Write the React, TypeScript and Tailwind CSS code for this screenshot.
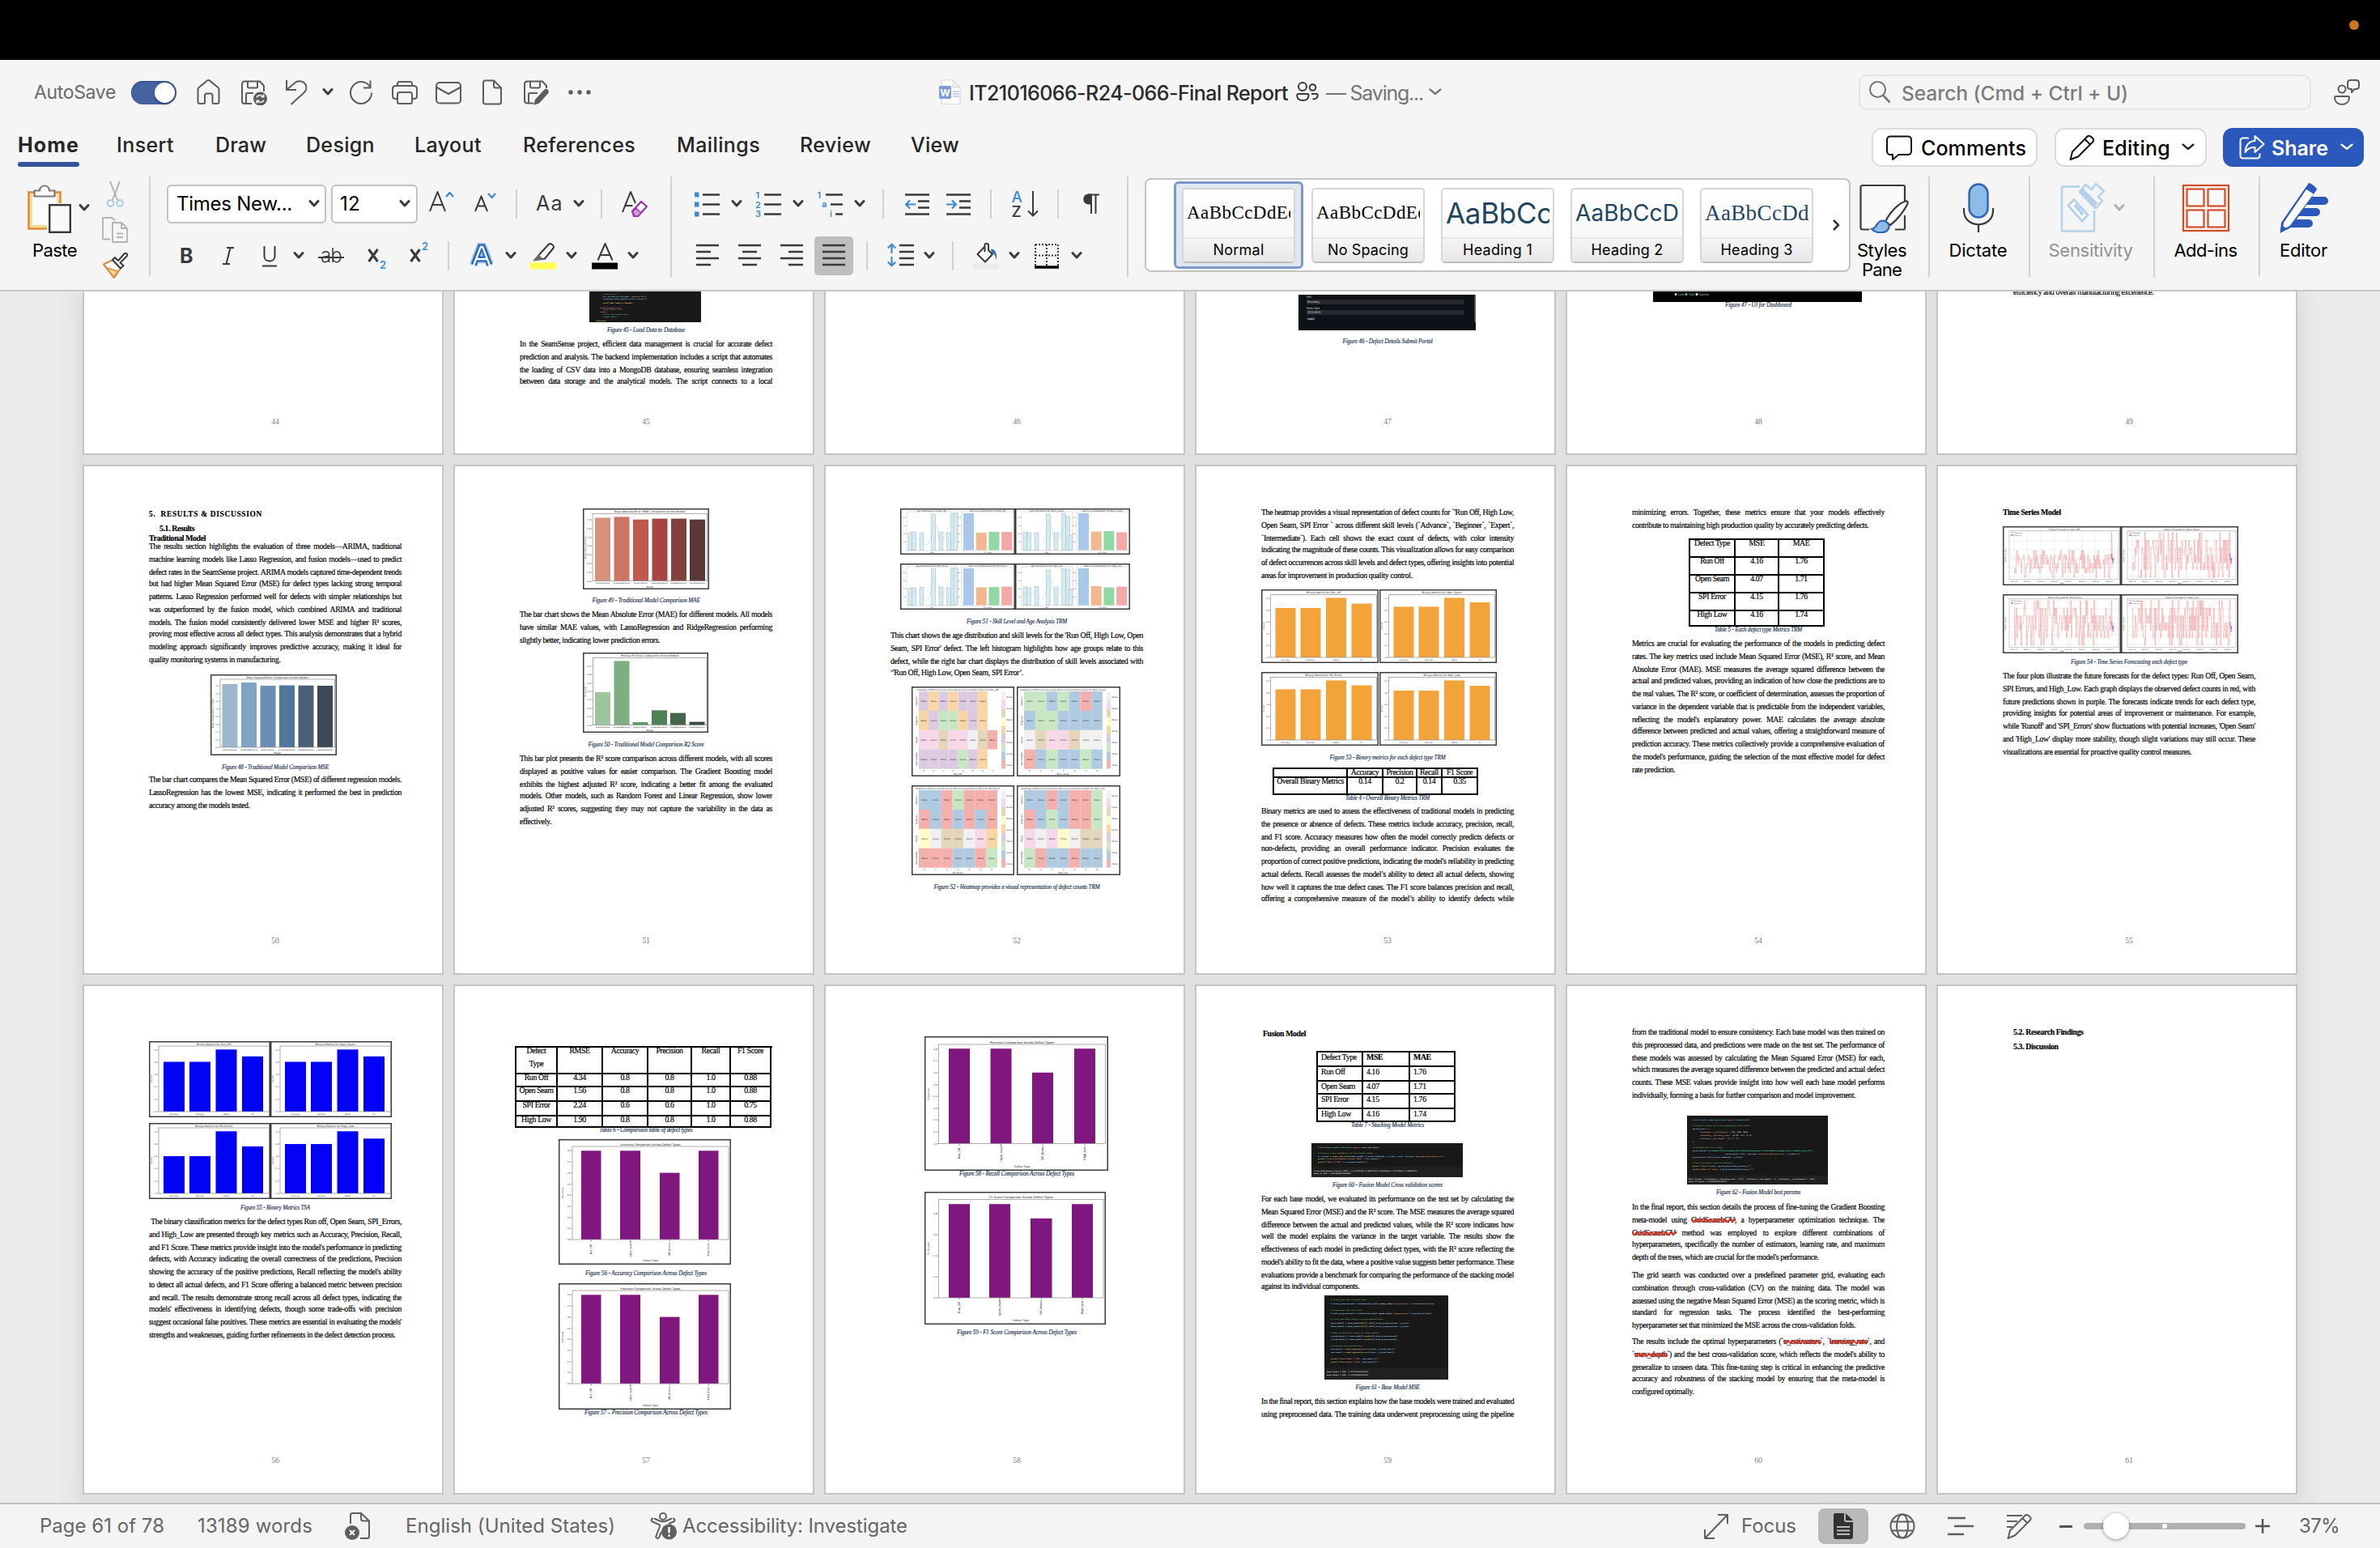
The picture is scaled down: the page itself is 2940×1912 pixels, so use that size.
import React, { useLayoutEffect, useRef, useState } from "react";

/* ------------------------------------------------------------------ */
/* Text helpers                                                        */
/* ------------------------------------------------------------------ */

/** Single-line text that spreads or tightens its tracking to fill `w` pixels. */
function Fit({ w, className = "", children }: { w: number; className?: string; children: string }) {
  const ref = useRef<HTMLSpanElement>(null);
  const [spacing, setSpacing] = useState(0);
  useLayoutEffect(() => {
    const el = ref.current;
    if (!el) return;
    el.style.letterSpacing = "0px";
    const natural = el.getBoundingClientRect().width;
    const next = (w - natural) / children.length;
    el.style.letterSpacing = `${next}px`;
    setSpacing(next);
  }, [w, children]);
  return (
    <span ref={ref} className={`inline-block whitespace-pre shrink-0 ${className}`} style={{ letterSpacing: spacing }}>
      {children}
    </span>
  );
}

const misspelt = /(\{[^}]+\})/;
const bodyTracking = -0.37;

/** Red zigzag drawn over the lower half of a misspelt word. */
function Squiggle() {
  const teeth = Array.from({ length: 20 }, (_, i) => `L${(i * 6 + 3).toFixed(1)} 5.5L${i * 6 + 6} 1.5`).join("");
  return (
    <svg className="absolute top-[5px] left-0 h-[7px] w-[calc(100%+1px)] overflow-hidden" fill="none" stroke="#dc3222" strokeWidth="1.9">
      <path d={`M0 1.5${teeth}`} strokeLinejoin="round" />
    </svg>
  );
}

/** One justified line of a paragraph; tightens when the words are too wide. */
function Line({ text, dip, last }: { text: string; dip: boolean; last: boolean }) {
  const ref = useRef<HTMLDivElement>(null);
  const [spacing, setSpacing] = useState(bodyTracking);
  useLayoutEffect(() => {
    const el = ref.current;
    if (!el) return;
    el.style.letterSpacing = `${bodyTracking}px`;
    const extra = el.scrollWidth - el.clientWidth;
    const next = bodyTracking - (extra > 0 ? (extra + 0.6) / text.length : 0);
    el.style.letterSpacing = `${next}px`;
    setSpacing(next);
  }, [text]);
  return (
    <div
      ref={ref}
      className={`h-4 leading-4 whitespace-nowrap ${dip ? "-mt-0.5" : ""} ${last ? "" : "[text-align-last:justify]"}`}
      style={{ letterSpacing: spacing }}
    >
      {text.split(misspelt).map((part, i) =>
        part.startsWith("{") ? (
          <span key={i} className="relative inline-block leading-4">
            {part.slice(1, -1)}
            <Squiggle />
          </span>
        ) : (
          <React.Fragment key={i}>{part}</React.Fragment>
        ),
      )}
    </div>
  );
}

function Para({ className = "", lines, open = false }: { className?: string; lines: string[]; open?: boolean }) {
  return (
    <div className={className}>
      {lines.map((l, i) => (
        <Line key={i} text={l} dip={i % 4 === 3} last={!open && i === lines.length - 1} />
      ))}
    </div>
  );
}

function Caption({ className = "", w, children }: { className?: string; w: number; children: string }) {
  return (
    <div className={`flex h-3 justify-center text-[7.2px] leading-3 italic text-[#2c3c57] ${className}`}>
      <Fit w={w}>{children}</Fit>
    </div>
  );
}

/* ------------------------------------------------------------------ */
/* Pages                                                               */
/* ------------------------------------------------------------------ */

function Page({ n, short = false, children }: { n: number; short?: boolean; children?: React.ReactNode }) {
  return (
    <article
      className={`flex w-[446px] shrink-0 flex-col overflow-hidden border-2 border-[#c4c4c4] bg-white pr-[50px] pl-20 font-['Liberation_Serif','Times_New_Roman',serif] text-[9.8px] tracking-[-0.37px] text-black [-webkit-text-stroke:0.18px_currentColor] ${
        short ? "h-[202px] border-t-0" : "h-[630px]"
      }`}
    >
      {children}
      <div className={`mt-auto h-4 text-center leading-4 tracking-[-0.2px] text-[#7a7a7a] [-webkit-text-stroke:0px] ${short ? "mb-[31px]" : "mb-8"}`}>{n}</div>
    </article>
  );
}

/* ------------------------------------------------------------------ */
/* Charts                                                              */
/* ------------------------------------------------------------------ */

type Bar = [x: number, w: number, top: number];

interface ChartProps {
  w: number;
  h: number;
  plot: [number, number, number, number];
  bars: Bar[];
  colors: string[];
  title: string;
  labels: string[];
  xTitle?: string;
  yTitle?: string;
  ticks: string[];
  tickStep: number;
  rotated?: boolean;
  className?: string;
  size?: number;
}

function BarChart({ w, h, plot, bars, colors, title, labels, xTitle, yTitle, ticks, tickStep, rotated, className = "", size = 2.6 }: ChartProps) {
  const [x0, y0, x1, y1] = plot;
  const base = y1;
  return (
    <svg width={w} height={h} viewBox={`0 0 ${w} ${h}`} className={`shrink-0 tracking-normal ${className}`} fontFamily="DejaVu Sans, sans-serif" stroke="none">
      <rect x="0.75" y="0.75" width={w - 1.5} height={h - 1.5} fill="#fff" stroke="#3c3c3c" strokeWidth="1.5" />
      {bars.map(([bx, bw, top], i) => (
        <rect key={i} x={bx} y={top} width={bw} height={base - top} fill={colors[i % colors.length]} />
      ))}
      <rect x={x0} y={y0} width={x1 - x0} height={y1 - y0} fill="none" stroke="#8a8a8a" strokeWidth="0.7" />
      <text x={(x0 + x1) / 2} y={y0 - 1.4} fontSize={size * 1.35} textAnchor="middle" fill="#111">
        {title}
      </text>
      {ticks.map((t, i) => (
        <g key={i}>
          <path d={`M${x0 - 1.5} ${base - i * tickStep}H${x0}`} stroke="#777" strokeWidth="0.5" />
          <text x={x0 - 2} y={base - i * tickStep + 1} fontSize={size} textAnchor="end" fill="#333">
            {t}
          </text>
        </g>
      ))}
      {labels.map((l, i) => {
        const cx = bars[i][0] + bars[i][1] / 2;
        return rotated ? (
          <g key={i}>
            <path d={`M${cx} ${base}v2.5`} stroke="#555" strokeWidth="0.6" />
            <text transform={`translate(${cx + 1.2} ${base + 12}) rotate(-90)`} fontSize={size * 1.25} textAnchor="middle" fill="#111">
              {l}
            </text>
          </g>
        ) : (
          <text key={i} x={cx} y={base + 3.6} fontSize={size} textAnchor="middle" fill="#222">
            {l}
          </text>
        );
      })}
      {xTitle && (
        <text x={(x0 + x1) / 2} y={h - (rotated ? 4 : 2)} fontSize={size * 1.2} textAnchor="middle" fill="#111">
          {xTitle}
        </text>
      )}
      {yTitle && (
        <text transform={`translate(${rotated ? 5.5 : 4} ${(y0 + y1) / 2}) rotate(-90)`} fontSize={size * 1.15} textAnchor="middle" fill="#333">
          {yTitle}
        </text>
      )}
    </svg>
  );
}

const modelNames = ["RandomForest", "GradientBoosting", "SupportVector", "LinearRegression", "RidgeRegression", "LassoRegression"];
const metricNames = ["Accuracy", "Precision", "Recall", "F1"];
const defectNames = ["Run_Off", "Open_Seam", "SPI_Errors", "High_Low"];

function SkillChart({ hist, skills, name }: { hist: number[]; skills: number[]; name: string }) {
  const xs = [10, 14.5, 24, 38.5, 48, 57.5, 62.5, 66];
  return (
    <svg width="142" height="57" viewBox="0 0 142 57" className="shrink-0 tracking-normal" fontFamily="DejaVu Sans, sans-serif" stroke="none">
      <rect x="0.75" y="0.75" width="140.5" height="55.5" fill="#fff" stroke="#3c3c3c" strokeWidth="1.5" />
      <rect x="8" y="4" width="63" height="48" fill="none" stroke="#bbb" strokeWidth="0.5" />
      <rect x="76" y="4" width="64" height="48" fill="none" stroke="#bbb" strokeWidth="0.5" />
      {hist.map((t, i) => (
        <rect key={i} x={xs[i]} y={t} width="5" height={51.5 - t} fill="#d5edf2" stroke="#8fa3a7" strokeWidth="0.4" />
      ))}
      <path d="M10 38q6-4 12 0t10 8q5-2 8-22t8 14q4 8 8-6t10-16" fill="none" stroke="#add8e6" strokeWidth="0.5" />
      {skills.map((t, i) => (
        <rect key={i} x={78 + i * 15.7} y={t} width="13" height={51.5 - t} fill={["#a9c7ea", "#f1b78f", "#91d8a2", "#f4a8a8"][i]} />
      ))}
      <text x="39" y="3.6" fontSize="2.6" textAnchor="middle" fill="#333">{`Age Distribution for ${name}`}</text>
      <text x="108" y="3.6" fontSize="2.6" textAnchor="middle" fill="#333">{`Skill Level Distribution for ${name}`}</text>
      <text x="39" y="55.2" fontSize="2" textAnchor="middle" fill="#333">Age</text>
      <text x="108" y="55.2" fontSize="2" textAnchor="middle" fill="#333">Skill_Level</text>
      {[12, 22, 32, 42].map((y, i) => (
        <g key={y} fill="#555" fontSize="2">
          <text x="7" y={y} textAnchor="end">{400 - i * 100}</text>
          <text x="75" y={y} textAnchor="end">{800 - i * 200}</text>
        </g>
      ))}
    </svg>
  );
}

const pastel: Record<string, string> = {
  R: "#f3b0ad", B: "#b0cbe1", G: "#cae7c4", P: "#dccae2", O: "#fad6a5", Y: "#fefdca", T: "#e3d6bb", K: "#f7d8e9", W: "#f1f1f1", _: "#ffffff",
};

function Heatmap({ w, rows, name }: { w: number; rows: string[]; name: string }) {
  const cols = rows[0].length;
  const cw = 97 / cols;
  return (
    <svg width={w} height="111" viewBox={`0 0 ${w} 111`} className="shrink-0 tracking-normal" fontFamily="DejaVu Sans, sans-serif" stroke="none">
      <rect x="0.75" y="0.75" width={w - 1.5} height="109.5" fill="#fff" stroke="#3c3c3c" strokeWidth="1.5" />
      <text x="57" y="4.6" fontSize="2.7" textAnchor="middle" fill="#222">{`Heatmap of Defect Counts across Skill Levels and Defect Types for ${name}`}</text>
      {rows.map((row, r) =>
        row.split("").map((c, i) => (
          <g key={`${r}-${i}`}>
            <rect x={9 + i * cw} y={6 + r * 23.9} width={cw + 0.1} height="24" fill={pastel[c]} />
            {c !== "_" && (
              <text x={9 + (i + 0.5) * cw} y={19 + r * 23.9} fontSize="2.5" textAnchor="middle" fill="#222">
                {23000 + ((i * 7 + r * 5) % 9) * 1000}
              </text>
            )}
          </g>
        )),
      )}
      {rows[0].split("").map((_, i) => (
        <text key={i} x={9 + (i + 0.5) * cw} y="105" fontSize="2.6" textAnchor="middle" fill="#222">{i}</text>
      ))}
      {"WKTYOPGBR".split("").map((c, i) => (
        <rect key={c} x="111" y={6 + i * 10.6} width="5" height="10.7" fill={pastel[c]} />
      ))}
      {Array.from({ length: 7 }, (_, i) => (
        <text key={i} x="117" y={14 + i * 14} fontSize="2.5" fill="#222">{45000 - i * 5000}</text>
      ))}
      {["Advance", "Beginner", "Expert", "Intermediate"].map((s, i) => (
        <text key={s} transform={`translate(7.4 ${18 + i * 23.9}) rotate(-90)`} fontSize="2.6" textAnchor="middle" fill="#222">{s}</text>
      ))}
      <text x="57" y="108.6" fontSize="2.6" textAnchor="middle" fill="#222">{name}</text>
    </svg>
  );
}

function noise(seed: number, low: number, high: number, top: number) {
  let s = seed;
  const rnd = () => {
    s = (s * 16807) % 2147483647;
    return s / 2147483647;
  };
  for (let i = 0; i < 8; i++) rnd();
  let d = "";
  for (let x = 14; x < 134; x += 0.85) {
    const level = Math.round(rnd() * 6) / 6;
    const y = low - level * (low - high);
    d += d ? `H${x.toFixed(1)}V${y.toFixed(1)}` : `M${x.toFixed(1)} ${y.toFixed(1)}`;
  }
  return `${d}L134.5 ${top}L135.3 ${low - 12}`;
}

function Series({ w, seed, high, name }: { w: number; seed: number; high: number; name: string }) {
  return (
    <svg width={w} height="73" viewBox={`0 0 ${w} 73`} className="shrink-0 tracking-normal" fontFamily="DejaVu Sans, sans-serif">
      <rect x="0.75" y="0.75" width={w - 1.5} height="71.5" fill="#fff" stroke="#3c3c3c" strokeWidth="1.5" />
      <rect x="8" y="5.5" width={w - 11} height="60" fill="none" stroke="#aaa" strokeWidth="0.6" />
      <path
        d={`M14 5.5v60M30 5.5v60M47 5.5v60M64 5.5v60M81 5.5v60M98 5.5v60M115 5.5v60M132 5.5v60M8 7h${w - 11}M8 18h${w - 11}M8 29h${w - 11}M8 40h${w - 11}M8 51h${w - 11}M8 62h${w - 11}`}
        stroke="#dedede" strokeWidth="0.5" fill="none"
      />
      <path d={noise(seed, 63, high, 7.5)} fill="none" stroke="#e8484c" strokeOpacity="0.7" strokeWidth="0.42" />
      <path d="M134.5 34l1 8 1 4M136 44l1-5" fill="none" stroke="#a33bb5" strokeWidth="1.1" strokeDasharray="1.4 0.8" />
      <g stroke="none">
        <text x={w / 2 + 3} y="4.6" fontSize="2.8" textAnchor="middle" fill="#333">{`Future Forecast for ${name}`}</text>
        {[14, 30, 47, 64, 81, 98, 115, 132].map((x, i) => (
          <text key={x} x={x} y="68.6" fontSize="2.2" textAnchor="middle" fill="#444">{`202${1 + (i >> 1)}-0${1 + (i % 2) * 6}`}</text>
        ))}
        <text x={w / 2} y="71.2" fontSize="2.2" textAnchor="middle" fill="#444">Date</text>
        <text transform="translate(4 36) rotate(-90)" fontSize="2.4" textAnchor="middle" fill="#555">Defect Counts</text>
        <text x="14" y="9" fontSize="2" fill="#444">Observed</text>
        <text x="14" y="12" fontSize="2" fill="#444">Forecast</text>
      </g>
      <path d="M10 8h3" stroke="#e8484c" strokeWidth="0.6" />
      <path d="M10 11h3" stroke="#8e24aa" strokeWidth="1" />
    </svg>
  );
}

/* ------------------------------------------------------------------ */
/* Dark editor captures                                                */
/* ------------------------------------------------------------------ */

type Token = [text: string, tone: string];
interface CodeLine {
  x: number;
  y: number;
  t: Token[];
}
const tones: Record<string, string> = { g: "#6a9955", b: "#8fc6e8", o: "#ce9178", y: "#dcc873", w: "#d4d4d4", p: "#c586c0", t: "#4ec9b0" };

function CodeShot({ w, h, split, lines, size = 2.45, className = "" }: { w: number; h: number; split?: number; lines: CodeLine[]; size?: number; className?: string }) {
  return (
    <svg width={w} height={h} viewBox={`0 0 ${w} ${h}`} className={`shrink-0 tracking-normal ${className}`} fontFamily="DejaVu Sans Mono, monospace" fontWeight="700" fontSize={size} stroke="none">
      <rect width={w} height={h} fill="#181818" />
      {split && <rect y={split} width={w} height={h - split} fill="#202020" />}
      {lines.map((l, i) => (
        <text key={i} x={l.x} y={l.y} xmlSpace="preserve">
          {l.t.map(([s, tone], j) => (
            <tspan key={j} fill={tones[tone]}>{s}</tspan>
          ))}
        </text>
      ))}
    </svg>
  );
}

/* ------------------------------------------------------------------ */
/* Tables                                                              */
/* ------------------------------------------------------------------ */

interface TableProps {
  cols: string;
  rows: { h: string; cells: string[] }[];
  className?: string;
  left?: boolean;
  lead?: string;
}

function Table({ cols, rows, className = "", left, lead = "leading-[9px]" }: TableProps) {
  return (
    <div className={`shrink-0 border-t-2 border-l-2 border-black ${className}`}>
      {rows.map((r, i) => (
        <div key={i} className={`grid ${cols} ${r.h}`}>
          {r.cells.map((c, j) => (
            <div
              key={j}
              className={`border-r-2 border-b-2 border-black whitespace-nowrap ${lead} ${
                left ? `pl-1 text-left ${i === 0 && j > 0 ? "font-bold" : ""}` : "text-center"
              }`}
            >
              {c.split("\n").map((part, k) => (
                <div key={k} className={k ? "mt-[7px]" : ""}>
                  {part}
                </div>
              ))}
            </div>
          ))}
        </div>
      ))}
    </div>
  );
}

/* ------------------------------------------------------------------ */
/* Ribbon primitives                                                   */
/* ------------------------------------------------------------------ */

function Ico({ className = "", w = 32, h = 32, children, sw = 2, stroke = "#5c5c5c" }: { className?: string; w?: number; h?: number; children: React.ReactNode; sw?: number; stroke?: string }) {
  return (
    <svg width={w} height={h} viewBox={`0 0 ${w} ${h}`} fill="none" stroke={stroke} strokeWidth={sw} strokeLinejoin="round" strokeLinecap="butt" className={`shrink-0 ${className}`}>
      {children}
    </svg>
  );
}

function Chev({ className = "", color = "#3c3c3c", w = 14, sw = 3 }: { className?: string; color?: string; w?: number; sw?: number }) {
  return (
    <svg width={w} height="10" viewBox="0 0 14 10" preserveAspectRatio="none" fill="none" stroke={color} strokeWidth={sw} className={`shrink-0 ${className}`}>
      <path d="M2 1.5l5 5.5 5-5.5" strokeLinecap="round" strokeLinejoin="round" />
    </svg>
  );
}

const Bar2 = ({ className = "" }: { className?: string }) => <div className={`h-9 w-0.5 shrink-0 bg-[#d2d2d2] ${className}`} />;
const Divider = ({ className = "" }: { className?: string }) => <div className={`h-[124px] w-0.5 shrink-0 bg-[#d2d2d2] ${className}`} />;

function StyleCard({ sample, sampleClass, name, nameW, sampleW }: { sample: string; sampleClass: string; name: string; nameW: number; sampleW: number }) {
  return (
    <div className="flex h-[93px] w-[140px] shrink-0 flex-col overflow-hidden rounded-[5px] border-2 border-[#d6d6d6] border-b-[#bcbcbc] bg-white">
      <div className="flex h-[60px] items-center overflow-hidden bg-gradient-to-b from-white to-[#f8f8f8] px-1">
        <div className="w-[129px] overflow-hidden">
          <Fit w={sampleW} className={sampleClass}>{sample}</Fit>
        </div>
      </div>
      <div className="flex flex-1 items-center justify-center border-t-2 border-[#e6e6e6] bg-gradient-to-b from-[#f4f4f4] to-[#e8e8e8] text-[18px] leading-7 text-black">
        <Fit w={nameW}>{name}</Fit>
      </div>
    </div>
  );
}

function BigButton({ className, label, w, second, w2 = 0, dim, children }: { className: string; label: string; w: number; second?: string; w2?: number; dim?: boolean; children: React.ReactNode }) {
  return (
    <div className={`flex shrink-0 flex-col items-center pr-[3px] ${className}`}>
      <div className="mt-1.5 flex h-[66px] items-center">{children}</div>
      <div className={`mt-[5px] flex h-7 items-center text-[22px] leading-7 ${dim ? "text-[#929292]" : "text-black"}`}>
        <Fit w={w}>{label}</Fit>
      </div>
      {second && (
        <div className="-mt-1 flex h-7 items-center text-[22px] leading-7 text-black">
          <Fit w={w2}>{second}</Fit>
        </div>
      )}
    </div>
  );
}

/* ------------------------------------------------------------------ */
/* Title bar                                                           */
/* ------------------------------------------------------------------ */

function TitleBar() {
  return (
    <div className="flex h-20 items-center">
      <Fit w={101} className="mt-px ml-[42px] text-[23px] text-[#6a6a6a]">AutoSave</Fit>
      <div className="ml-[19px] flex h-[29px] w-14 shrink-0 justify-end rounded-full bg-[#44639f] p-0.5 shadow-[inset_0_1px_2px_#2b4780]">
        <div className="size-[25px] rounded-full bg-white shadow-[0_2px_3px_rgba(0,0,0,0.35)]" />
      </div>
      <Ico className="ml-6">
        <path d="M2.5 12.5c0-1 .4-1.7 1.2-2.4L14 1.6c1-.8 2-.8 3 0l10.300 8.500c.8.7 1.200 1.400 1.200 2.400V27.500c0 1.500-1 2.500-2.500 2.500h-4c-1 0-1.500-.5-1.500-1.500V20c0-1.500-1-2.500-2.500-2.500h-4.500c-1.500 0-2.500 1-2.500 2.500v8.500c0 1-.5 1.500-1.500 1.500H5c-1.500 0-2.500-1-2.500-2.500z" />
      </Ico>
      <Ico className="ml-6">
        <path d="M13 30H4.500C2.500 30 1 28.500 1 26.500V6c0-2 1.500-3.500 3.500-3.500H23L28 8v7M8 2.500V9c0 1 .5 1.500 1.500 1.500h9c1 0 1.500-.5 1.500-1.500V2.500M6 30V18.500C6 17.500 6.500 17 7.500 17H15" />
        <circle cx="23.500" cy="24" r="8.500" fill="#5c5c5c" stroke="none" />
        <path d="M19 22.500c1-2.800 5.500-4 8.300-1.200M28 25.500c-1 2.800-5.500 4-8.300 1.200M27.800 18.500v3.200h-3.200M19.200 29.500v-3.200h3.200" stroke="#f5f5f5" strokeWidth="1.600" />
      </Ico>
      <Ico className="ml-[21px]">
        <path d="M3 1v12h12M3.500 12.500L13 4.500c3.500-3 9.500-3 12.500.5s2.500 8-1 11.500L8.500 31" />
      </Ico>
      <Chev className="ml-[15px]" />
      <Ico className="ml-[19px]">
        <path d="M26.500 10C24 5.500 19.500 3 15 3 8 3 2 9 2 16.500S8 30 15 30s13-6 13-13.500M26.500 1.500V10.500H18" />
      </Ico>
      <Ico className="ml-[21px]">
        <path d="M7 8V5.500C7 4 8 3 9.500 3h13C24 3 25 4 25 5.500V8M7 24H4.500C2.500 24 1 22.500 1 20.500V12c0-2.500 1.500-4 4-4h22c2.500 0 4 1.500 4 4v8.500c0 2-1.500 3.500-3.500 3.500H25M7 18.500C7 17 8 16 9.500 16h13c1.500 0 2.500 1 2.500 2.500v9c0 1.500-1 2.500-2.500 2.500h-13C8 30 7 29 7 27.500z" />
      </Ico>
      <Ico className="ml-[22px]">
        <rect x="1" y="4" width="30" height="25.500" rx="4" />
        <path d="M1.500 10L16 18l14.500-8" />
      </Ico>
      <Ico className="ml-[22px]">
        <path d="M18 1.500H7.500C6 1.500 5 2.500 5 4v24c0 1.500 1 2.500 2.500 2.500h17c1.500 0 2.500-1 2.500-2.500V10.500zM18 1.500v6.500c0 1.500 1 2.500 2.500 2.500H27" />
      </Ico>
      <Ico className="ml-[23px]">
        <path d="M12 29.500H4.500C2.500 29.500 1 28 1 26V6c0-2 1.500-3.500 3.500-3.500H23L28 8v3M8 2.500V9c0 1 .5 1.500 1.500 1.500h9c1 0 1.500-.5 1.500-1.500V2.500M6 29.500V18.500C6 17.500 6.500 17 7.500 17H17" />
        <path d="M26 13.500c2-2 5 1 3.300 3.200L18.500 28.500l-5 2 1.500-5z" fill="#5c5c5c" />
      </Ico>
      <Ico className="ml-[21px]" stroke="none">
        <circle cx="5" cy="16" r="2.700" fill="#5c5c5c" />
        <circle cx="16" cy="16" r="2.700" fill="#5c5c5c" />
        <circle cx="27" cy="16" r="2.700" fill="#5c5c5c" />
      </Ico>

      <svg width="32" height="32" viewBox="0 0 32 32" className="ml-[426px] shrink-0">
        <path d="M5 1h14l9 9v20.500H5z" fill="#fff" stroke="#d8d8d8" strokeWidth="1.200" />
        <path d="M19 1l9 9h-9z" fill="#ededed" stroke="#d0d0d0" strokeWidth="0.800" />
        <path d="M19 15h8M19 18h8M19 21h8" stroke="#89a6e0" strokeWidth="1.200" />
        <rect x="2" y="8" width="15" height="16" rx="1.500" fill="#7d9adb" />
        <text x="9.500" y="20.500" fontSize="12" fontWeight="700" fontFamily="Inter, sans-serif" textAnchor="middle" fill="#fff">W</text>
      </svg>
      <Fit w={394} className="mt-[3px] ml-[7px] text-[25px] font-medium text-[#2b2b2b]">IT21016066-R24-066-Final Report</Fit>
      <Ico className="ml-[9px]" stroke="#3a3a3a">
        <circle cx="9" cy="9" r="5" />
        <circle cx="21.500" cy="10" r="3.800" />
        <path d="M3.500 18h11.500c1.200 0 1.500.6 1.500 1.500 0 4-2.500 6.500-7 6.500s-7.300-2.500-7.300-6.500c0-.9.3-1.500 1.300-1.500zM20 18h6.500c1 0 1.300.5 1.300 1.300 0 3-2.300 5.200-6.300 5.200" />
      </Ico>
      <Fit w={120} className="mt-[3px] ml-1.5 text-[25px] text-[#757575]">— Saving...</Fit>
      <Chev className="ml-[6px]" w={18} color="#757575" sw={2} />

      <div className="ml-[514px] flex h-11 w-[559px] shrink-0 items-center rounded-[10px] border-2 border-[#e6e6e6]">
        <Ico className="ml-2.5" w={30} h={30} stroke="#757575">
          <circle cx="11.500" cy="11.500" r="9.500" />
          <path d="M18.500 19l8 8.500" strokeWidth="2.600" />
        </Ico>
        <Fit w={280} className="mt-[3px] ml-[11px] text-[24.5px] font-medium text-[#7c7c7c]">Search (Cmd + Ctrl + U)</Fit>
      </div>
      <Ico className="ml-7">
        <circle cx="10" cy="12" r="4.500" />
        <path d="M2.500 21h15c1 0 1.500.5 1.500 1.500 0 5-3.500 8.500-9 8.500s-9-3.500-9-8.500C1 21.500 1.500 21 2.500 21zM20.500 1h7C29.500 1 31 2.500 31 4.500v4c0 2-1.500 3.500-3.500 3.500h-2L22 16v-4h-1.500c-2 0-3.500-1.500-3.500-3.500v-4C17 2.500 18.500 1 20.500 1z" />
      </Ico>
    </div>
  );
}

function Tab({ className, w, active, children }: { className: string; w: number; active?: boolean; children: string }) {
  return (
    <div className={`flex shrink-0 flex-col ${className}`}>
      <div className="h-11 leading-[47px]">
        <Fit w={w} className={`text-[25px] text-[#262626] ${active ? "font-bold" : "font-medium"}`}>{children}</Fit>
      </div>
      {active && <div className="h-1.5 rounded-full bg-[#34549c]" />}
    </div>
  );
}

function TabBar() {
  return (
    <div className="flex h-16 items-start">
      <div className="mt-0.5 flex">
        <Tab className="ml-[22px] w-[76px]" w={76} active>Home</Tab>
        <Tab className="ml-[46px] w-[71px]" w={71}>Insert</Tab>
        <Tab className="ml-[51px] w-[63px]" w={63}>Draw</Tab>
        <Tab className="ml-[49px] w-[85px]" w={85}>Design</Tab>
        <Tab className="ml-[49px] w-[83px]" w={83}>Layout</Tab>
        <Tab className="ml-[51px] w-[139px]" w={139}>References</Tab>
        <Tab className="ml-[51px] w-[103px]" w={103}>Mailings</Tab>
        <Tab className="ml-[49px] w-[88px]" w={88}>Review</Tab>
        <Tab className="ml-[49px] w-[60px]" w={60}>View</Tab>
      </div>
      <div className="mt-1 ml-[1127px] flex h-12 w-[205px] shrink-0 items-center rounded-xl border-2 border-[#dcdcdc] bg-white">
        <Ico className="ml-4" stroke="#111">
          <path d="M5 2.500h22c2 0 4 1.500 4 4V21c0 2.500-2 4-4 4H15.500L8 31v-6H5c-2 0-4-1.500-4-4V6.500c0-2.500 2-4 4-4z" />
        </Ico>
        <Fit w={130} className="mt-[3px] ml-[11px] text-[25px] font-medium text-black">Comments</Fit>
      </div>
      <div className="mt-1 ml-[21px] flex h-12 w-[188px] shrink-0 items-center rounded-xl border-2 border-[#dcdcdc] bg-white">
        <Ico className="ml-4" stroke="#111">
          <path d="M22.500 2.500c2.500-2.500 9.500 3 7 6.500L11 27.500 1.500 31 4 21.500zM19.500 6l6.500 6.500" />
        </Ico>
        <Fit w={84} className="mt-[3px] ml-[9px] text-[25px] font-medium text-black">Editing</Fit>
        <Chev className="ml-[13px]" w={18} color="#222" sw={2} />
      </div>
      <div className="mt-1 ml-5 flex h-12 w-[174px] shrink-0 items-center rounded-xl bg-[#2b59bb]">
        <Ico className="ml-5" stroke="#fff">
          <path d="M12 4.500H5C3 4.500 1.500 6 1.500 8v18c0 2 1.500 3.500 3.500 3.500h17c2 0 3.500-1.500 3.500-3.500v-2.500" />
          <path d="M19.500 2L30.500 12l-11 10v-6C13.500 15.500 10 18 7.500 22 8 14 12 8.500 19.500 8z" />
        </Ico>
        <Fit w={70} className="mt-[3px] ml-2 text-[25px] font-semibold text-white">Share</Fit>
        <Chev className="ml-[14px]" w={18} color="#fff" sw={2} />
      </div>
    </div>
  );
}

/* ------------------------------------------------------------------ */
/* Ribbon                                                              */
/* ------------------------------------------------------------------ */

const ink = "#3a3a3a";
const blue = "#3d8bd0";

function ClipboardGroup() {
  return (
    <div className="flex h-[124px] w-[184px] shrink-0">
      <div className="ml-8 flex w-[60px] flex-col">
        <svg width="60" height="60" viewBox="0 0 60 60" className="mt-2.5 shrink-0" fill="none">
          <rect x="3.500" y="9.500" width="39" height="45" fill="#f5de98" stroke="#e08b42" strokeWidth="2.600" />
          <rect x="8" y="14" width="30" height="36" fill="#fafafa" />
          <path d="M10.500 14.500V7.500h6.500c0-8 12-8 12 0h6.500v7z" fill="#fff" stroke="#7a7a7a" strokeWidth="2.200" />
          <rect x="26" y="23" width="32" height="37" fill="#f5f5f5" />
          <rect x="29.200" y="25.200" width="25.600" height="33.600" fill="#fafafa" stroke={ink} strokeWidth="2.400" />
        </svg>
        <div className="mt-[7px] h-7 text-[22px] leading-7 text-black">
          <Fit w={55} className="ml-[8px]">Paste</Fit>
        </div>
      </div>
      <Chev className="mt-[34px] ml-[5px]" />
      <div className="mt-1.5 ml-[15px] flex flex-col gap-3">
        <Ico stroke="#adadad" sw={1.800}>
          <path d="M10 0l9 23M22 0l-9 23" />
          <circle cx="10.500" cy="27" r="3.800" stroke="#a9cdea" strokeWidth="2.200" />
          <circle cx="22" cy="27" r="3.800" stroke="#a9cdea" strokeWidth="2.200" />
        </Ico>
        <Ico stroke="#b3b3b3" sw={1.800}>
          <path d="M10 27.500H1V1h11.500L16 4.500" />
          <path d="M13 7h11l7 7v17H13zM24 7v7h7M18 20.500h8M18 25h8" />
        </Ico>
        <Ico stroke={ink} sw={2}>
          <path d="M2 14.500L13 9l10 10-8 12z" fill="#fff" stroke="#e08b42" strokeWidth="2.200" />
          <path d="M5 18.500l14 4.500-4 7.500z" fill="#f5de98" stroke="#e08b42" strokeWidth="1.800" />
          <path d="M13 9l3-3 4 4 7.500-8.500c2-2 5 1 3 3L22.500 12.500l4 3.500-3.500 3.500z" fill="#fff" />
        </Ico>
      </div>
    </div>
  );
}

function FontGroup() {
  return (
    <div className="flex h-[124px] w-[642px] shrink-0 flex-col gap-4 pt-2.5">
      <div className="flex h-12 items-center">
        <div className="ml-[20px] flex h-12 w-[197px] shrink-0 items-center rounded-md border-2 border-[#c2c2c2] bg-white">
          <Fit w={143} className="ml-[10px] text-[24px] text-black">Times New...</Fit>
          <Chev className="ml-[20px]" />
        </div>
        <div className="ml-1.5 flex h-12 w-[107px] shrink-0 items-center rounded-md border-2 border-[#c2c2c2] bg-white">
          <Fit w={25} className="ml-[9px] text-[24px] text-black">12</Fit>
          <Chev className="ml-[48px]" />
        </div>
        <Ico className="ml-3.5" stroke={ink} h={34}>
          <path d="M1 26L10.500 2l9.500 24M4.500 18h12" />
          <path d="M21 8l4.500-5L30 8" stroke={blue} strokeWidth="2.400" />
        </Ico>
        <Ico className="ml-6" stroke={ink} h={34}>
          <path d="M1 26L8.500 7.500 16 26M4 19.500h9" />
          <path d="M17 4l4.500 5L26 4" stroke={blue} strokeWidth="2.400" />
        </Ico>
        <Bar2 className="ml-[19px]" />
        <Fit w={34} className="ml-[23px] text-[25px] text-[#3a3a3a]">Aa</Fit>
        <Chev className="ml-3" />
        <Bar2 className="ml-5" />
        <Ico className="ml-6" stroke={ink}>
          <path d="M1 26L11 1l6 14M4.500 18h9" />
          <path d="M13 25l11-12 7 6-11 12h-5z" fill="#fff" stroke="#9537ab" strokeWidth="2.200" />
          <path d="M13.500 25.500l4-4.500 6.500 6-4 4h-4z" fill="#cf9ddb" stroke="#9537ab" strokeWidth="1.500" />
        </Ico>
      </div>
      <div className="flex h-12 items-center text-[#3a3a3a]">
        <span className="ml-9 w-4 shrink-0 text-[25px] leading-8 font-bold">B</span>
        <Ico className="ml-9" w={16} h={24} stroke={ink}>
          <path d="M6 2h9M1 22h9M10.500 2L5.500 22" />
        </Ico>
        <Ico className="ml-[34px]" w={18} h={28} stroke={ink}>
          <path d="M2.500 2v12.500c0 8 13 8 13 0V2M0 26.500h18" />
        </Ico>
        <Chev className="ml-5" />
        <div className="relative ml-[17px] flex w-8 shrink-0 justify-center text-[24px] leading-8 font-light">
          <Fit w={26}>ab</Fit>
          <div className="absolute top-[17px] left-0 h-0.5 w-8 bg-[#3a3a3a]" />
        </div>
        <Ico className="ml-[29px]" w={24} h={36} stroke={ink}>
          <path d="M1.500 10l11 15M12.500 10l-11 15" strokeWidth="3" />
          <text x="15" y="34" fontSize="13" fontWeight="600" fontFamily="Inter, sans-serif" fill={blue} stroke="none">2</text>
        </Ico>
        <Ico className="ml-7" w={24} h={36} stroke={ink}>
          <path d="M1.500 10l11 15M12.500 10l-11 15" strokeWidth="3" />
          <text x="15" y="11" fontSize="13" fontWeight="600" fontFamily="Inter, sans-serif" fill={blue} stroke="none">2</text>
        </Ico>
        <Bar2 className="ml-[23px]" />
        <Ico className="ml-6" stroke="none">
          <g strokeLinejoin="miter">
            <path d="M6 27L14.500 5h3L26 27M10 20h12" stroke="#94bdea" strokeWidth="10" />
            <path d="M6 27.500L14.500 5h3L26 27.500M10 20h12" stroke="#1f62b5" strokeWidth="6.500" />
            <path d="M6 28L14.800 5h2.400L26 28M10 20h12" stroke="#fff" strokeWidth="2.400" />
          </g>
        </Ico>
        <Chev className="ml-[13px]" />
        <Ico className="ml-[17px]" h={34} stroke={ink}>
          <path d="M12 14.500L22.500 3c2.500-2.500 8 1.500 6 4.500L18 20.500l-4 .5-4-3.500z" fill="#fafafa" />
          <path d="M10 15l6 6-3.500 1.500L3 23.500z" fill="#6d6d6d" stroke="none" />
          <rect x="0" y="25.500" width="32" height="8" fill="#ffff4d" stroke="none" />
        </Ico>
        <Chev className="ml-3" />
        <Ico className="ml-[18px]" h={34} stroke={ink}>
          <path d="M7.500 22.500L16.500 2l9 20.500M10.500 16h12" />
          <rect x="0" y="25.500" width="32" height="8" fill="#000" stroke="none" />
        </Ico>
        <Chev className="ml-3" />
      </div>
    </div>
  );
}

function ParagraphGroup() {
  return (
    <div className="flex h-[124px] w-[562px] shrink-0 flex-col gap-4 pt-2.5">
      <div className="flex h-12 items-center">
        <Ico className="ml-[27px]" stroke={ink}>
          <path d="M11 4.500h21M11 16.500h21M11 28.500h21" strokeWidth="2.400" />
          <path d="M1 1.500h5.500v6H1zM1 13.500h5.500v6H1zM1 25.500h5.500v6H1z" fill={blue} stroke="none" />
        </Ico>
        <Chev className="ml-3.5" />
        <Ico className="ml-4" stroke={ink}>
          <path d="M11 4.500h21M11 16.500h21M11 28.500h21" strokeWidth="2.400" />
          <g fill={blue} stroke="none" fontSize="11" fontWeight="600" fontFamily="Inter, sans-serif">
            <text x="0.500" y="8.500">1</text>
            <text x="0" y="20.500">2</text>
            <text x="0" y="32">3</text>
          </g>
        </Ico>
        <Chev className="ml-3.5" />
        <Ico className="ml-4" stroke={ink}>
          <path d="M11 4.500h21M17 16.500h15M23 28.500h9" strokeWidth="2.400" />
          <g fill={blue} stroke="none" fontSize="11" fontWeight="600" fontFamily="Inter, sans-serif">
            <text x="0.500" y="8.500">1</text>
            <text x="6" y="20">a</text>
            <text x="16" y="32">i</text>
          </g>
        </Ico>
        <Chev className="ml-3.5" />
        <Bar2 className="ml-[21px]" />
        <Ico className="ml-[25px]" stroke={ink}>
          <path d="M1 4.500h30M17 12.500h14M17 20.500h14M1 28.500h30" strokeWidth="2.400" />
          <path d="M14 16.500H2.500M7 11.500l-5 5 5 5" stroke={blue} strokeWidth="2.200" />
        </Ico>
        <Ico className="ml-[19px]" stroke={ink}>
          <path d="M1 4.500h30M17 12.500h14M17 20.500h14M1 28.500h30" strokeWidth="2.400" />
          <path d="M1 16.500h11.500M8 11.500l5 5-5 5" stroke={blue} strokeWidth="2.200" />
        </Ico>
        <Bar2 className="ml-[23px]" />
        <Ico className="ml-6" w={34} h={36} stroke={ink}>
          <path d="M27 2v30M21 26.500l6 6 6-6" />
          <g stroke="none" fontSize="19" fontWeight="500" fontFamily="Inter, sans-serif">
            <text x="0.500" y="16" fill={blue}>A</text>
            <text x="0.500" y="34" fill={ink}>Z</text>
          </g>
        </Ico>
        <Bar2 className="ml-[23px]" />
        <Ico className="ml-6" stroke={ink}>
          <path d="M12 4.500h14M16 4v24M21.500 4v24" strokeWidth="2" />
          <path d="M16 3.500h-3c-9 0-9 13 0 13h3z" fill={ink} stroke="none" />
        </Ico>
      </div>
      <div className="flex h-12 items-center">
        <Ico className="ml-7" stroke={ink}>
          <path d="M2 3h28M2 11h18M2 19h28M2 27h18" strokeWidth="2.400" />
        </Ico>
        <Ico className="ml-5" stroke={ink}>
          <path d="M2 3h28M7 11h18M2 19h28M7 27h18" strokeWidth="2.400" />
        </Ico>
        <Ico className="ml-5" stroke={ink}>
          <path d="M2 3h28M12 11h18M2 19h28M12 27h18" strokeWidth="2.400" />
        </Ico>
        <div className="ml-3 flex size-12 shrink-0 items-center justify-center rounded-[5px] bg-[#bebebe]">
          <Ico stroke={ink}>
            <path d="M2 3h28M2 11h28M2 19h28M2 27h28" strokeWidth="2.400" />
          </Ico>
        </div>
        <Bar2 className="ml-4" />
        <Ico className="ml-6" w={34} stroke={ink}>
          <path d="M15 3h18M15 11h18M15 19h18M15 27h18" strokeWidth="2.400" />
          <path d="M5.500 2v11M5.500 17v11M.8 6.500l4.700-4.800 4.700 4.800M.8 23.500l4.700 4.800 4.700-4.800" stroke={blue} strokeWidth="2.200" />
        </Ico>
        <Chev className="ml-[11px]" />
        <Bar2 className="ml-[21px]" />
        <Ico className="ml-6" h={34} stroke={ink}>
          <path d="M14.500 5.500L5.500 15l9.500 9.500 9-9.500-5-5V4c0-3-4.500-3-4.500 0v8" fill="#fafafa" />
          <path d="M22 8.500c5 0 8 5.500 7 14-1.500-6-3-8.500-6-9.500z" fill="#2b6cc0" stroke="none" />
          <rect x="0" y="26" width="32" height="8" fill="#ececec" stroke="none" />
        </Ico>
        <Chev className="ml-3" />
        <Ico className="ml-[17px]" stroke={ink}>
          <path d="M2 2h28M2 15.500h28M2 2v26M16 2v26M30 2v26" strokeDasharray="2 2" strokeWidth="2" />
          <path d="M1 30h30" strokeWidth="3.500" stroke="#000" />
        </Ico>
        <Chev className="ml-3.5" />
      </div>
    </div>
  );
}

function StyleGallery() {
  const serif = "font-['Liberation_Serif',serif] text-[23px] text-black leading-8";
  return (
    <div className="mt-0.5 ml-5 flex h-[116px] w-[872px] shrink-0 items-center rounded-lg border-2 border-[#c4c4c4] bg-white">
      <div className="ml-[34px] flex h-[108px] w-40 shrink-0 items-center justify-center rounded-md border-[3px] border-[#7c99c8] bg-[#e0e7f3]">
        <StyleCard sample="AaBbCcDdEe" sampleW={136} sampleClass={serif} name="Normal" nameW={63} />
      </div>
      <div className="ml-2.5 flex gap-5">
        <StyleCard sample="AaBbCcDdEe" sampleW={136} sampleClass={serif} name="No Spacing" nameW={100} />
        <StyleCard sample="AaBbCc" sampleW={132} sampleClass="text-[35px] leading-10 text-[#1f4560]" name="Heading 1" nameW={86} />
        <StyleCard sample="AaBbCcD" sampleW={128} sampleClass="text-[28px] leading-9 text-[#1f4560]" name="Heading 2" nameW={89} />
        <StyleCard sample="AaBbCcDd" sampleW={129} sampleClass="font-['Liberation_Serif',serif] text-[27px] leading-8 text-[#1f4560]" name="Heading 3" nameW={89} />
      </div>
      <Ico className="ml-[21px]" w={14} h={16} stroke="#333" sw={2.600}>
        <path d="M4 2l6 6-6 6" />
      </Ico>
    </div>
  );
}

function Ribbon() {
  return (
    <div className="flex h-[140px] items-start">
      <ClipboardGroup />
      <Divider />
      <FontGroup />
      <Divider />
      <ParagraphGroup />
      <Divider />
      <StyleGallery />
      <BigButton className="ml-1.5 w-[68px]" label="Styles" w={61} second="Pane" w2={49}>
        <svg width="66" height="62" viewBox="0 0 66 62" className="ml-1.5 shrink-0" fill="none">
          <path d="M58 22V5c0-1.500-1-2-2-2H6C4.500 3 3.500 4 3.500 5v50c0 1.500 1 2.500 2.500 2.500h8" fill="#fafafa" stroke={ink} strokeWidth="2.200" />
          <path d="M58 40v15.500c0 1-1 2-2 2H46" stroke={ink} strokeWidth="2.200" />
          <path d="M34 48C38 38 50 25 59 22.500c3-.5 3 2 2 4C57 35 48 46 40 52z" fill="#fff" stroke={ink} strokeWidth="2.200" />
          <path d="M17 57c6 0 6-10 13-10.500 6 0 10 5 8 9.500-3 7-15 7-21 1z" fill="#8fbbe8" stroke="#2b65b0" strokeWidth="2.200" />
        </svg>
      </BigButton>
      <Divider className="ml-[22px]" />
      <BigButton className="w-[122px]" label="Dictate" w={72}>
        <svg width="40" height="62" viewBox="0 0 40 62" className="shrink-0" fill="none">
          <rect x="8.500" y="1.500" width="23" height="41" rx="11.500" fill="#8fbbe8" stroke="#2b65b0" strokeWidth="2.400" />
          <path d="M2 31v3c0 23 36 23 36 0v-3M20 51v10" stroke={ink} strokeWidth="2.200" />
        </svg>
      </BigButton>
      <Divider />
      <BigButton className="w-[152px]" label="Sensitivity" w={104} dim>
        <div className="flex items-center">
          <svg width="58" height="62" viewBox="0 0 58 62" className="ml-1 shrink-0" fill="none" stroke="#b5d1ea" strokeWidth="2.400">
            <path d="M24 4.500H2v55h40V34" />
            <path d="M17 20.500l17 19-7 7.500-17-19z" fill="#fff" strokeWidth="3" />
            <path d="M18 27l10 12" strokeWidth="4" />
            <path d="M24 11l7-9 8 6 5-7 10 9-7 7 5 5-8 9z" fill="#f5f5f5" />
            <path d="M24 11l20 21-3-3 4-4-18-18z" fill="#b5d1ea" />
          </svg>
          <Chev className="ml-2" color="#b0b0b0" />
        </div>
      </BigButton>
      <Divider />
      <BigButton className="w-32" label="Add-ins" w={78}>
        <svg width="60" height="60" viewBox="0 0 60 60" className="shrink-0" fill="none" stroke="#cf4f2b" strokeWidth="2.200">
          <rect x="2" y="2" width="56" height="56" fill="#fdf3f0" />
          <rect x="6.500" y="6.500" width="21" height="21" fill="#fafafa" />
          <rect x="32.500" y="6.500" width="21" height="21" fill="#fafafa" />
          <rect x="6.500" y="32.500" width="21" height="21" fill="#fafafa" />
          <rect x="32.500" y="32.500" width="21" height="21" fill="#fafafa" />
        </svg>
      </BigButton>
      <Divider />
      <BigButton className="w-[110px]" label="Editor" w={59}>
        <svg width="62" height="64" viewBox="0 0 62 64" className="shrink-0">
          <path d="M34 18h22a5 5 0 0 1 0 10H28zM26 32h20a5 5 0 0 1 0 10H20zM20 46h17a5 5 0 0 1 0 10H12z" fill="#2b59bb" />
          <path d="M37 1c3 .5 9 5 10 8L15 56 1.500 63 3 50z" fill="#2b59bb" />
          <path d="M34 9l9 5.500L13.500 54l-5 2.500-3-2L6 50z" fill="#fff" />
        </svg>
      </BigButton>
    </div>
  );
}

/* ------------------------------------------------------------------ */
/* Status bar                                                          */
/* ------------------------------------------------------------------ */

function StatusBar() {
  const c = "#5f5f5f";
  return (
    <footer className="flex h-14 items-center border-t-2 border-[#c2c2c2] bg-[#f4f4f4] text-[24px] text-[#666]">
      <Fit w={154} className="ml-[49px]">Page 61 of 78</Fit>
      <Fit w={142} className="ml-[41px]">13189 words</Fit>
      <Ico className="ml-[39px]" w={34} h={36} stroke={c}>
        <path d="M8 15V4.500C8 3 9 2 10.500 2H21l10 9.500v19c0 1.500-1 2.500-2.500 2.500H20M21 2v7c0 1.500 1 2.500 2.500 2.500H31" />
        <circle cx="10" cy="26" r="9" fill={c} stroke="none" />
        <path d="M7 23l6 6M13 23l-6 6" stroke="#fff" />
      </Ico>
      <Fit w={259} className="ml-[42px]">English (United States)</Fit>
      <Ico className="ml-[43px]" w={34} h={36} stroke={c}>
        <circle cx="16" cy="6" r="4" />
        <path d="M4 8.500c-2.500 0-3.500 3-1 4l8 3.500c1 .5 1.300 1 1 2.500L7.500 30c-1 3 2.500 4 3.500 2l3-7M28 8.500c2.500 0 3.500 3 1 4l-6 2.500M5 8.500l7 3c2.500 1 5.500 1 8 0l7-3" />
        <circle cx="23.500" cy="25" r="9.500" fill={c} stroke="none" />
        <path d="M23.500 19v7.500M23.500 28.500v2.500" stroke="#fff" strokeWidth="2.400" />
      </Ico>
      <Fit w={278} className="ml-[6px]">Accessibility: Investigate</Fit>

      <Ico className="ml-[983px]" stroke={c}>
        <path d="M2 31L30 2M18 2h12v11M2 20v11h12" />
      </Ico>
      <Fit w={68} className="ml-[15px]">Focus</Fit>
      <div className="ml-[27px] flex h-11 w-[62px] shrink-0 items-center justify-center rounded-lg bg-[#b9b9b9]">
        <svg width="24" height="32" viewBox="0 0 24 32">
          <path d="M2.500 0H13v8.500c0 1.500 1 2.500 2.500 2.500H24v18.500c0 1.500-1 2.500-2.500 2.500h-19C1 32 0 31 0 29.500v-27C0 1 1 0 2.500 0z" fill="#333" />
          <path d="M15 0l9 9h-9z" fill="#333" />
          <path d="M4 17h16M4 21.500h16M4 26h16" stroke="#b9b9b9" strokeWidth="2" />
        </svg>
      </div>
      <Ico className="ml-[26px]" stroke={c}>
        <circle cx="16" cy="16" r="14.500" />
        <ellipse cx="16" cy="16" rx="7" ry="14.500" />
        <path d="M3 10.500h26M3 21.500h26" />
      </Ico>
      <Ico className="ml-10" stroke={c}>
        <path d="M0 6h22M8 16h24M0 26h20" strokeWidth="2.400" />
      </Ico>
      <Ico className="ml-10" stroke={c}>
        <path d="M1 3h19M1 10h13M1 17h7" />
        <path d="M23.500 3c2.500-2.500 9 2 6.500 5.500L11 27.500 2.500 31 5 21.500zM20.500 6.500l6.500 6" />
      </Ico>
      <div className="ml-[34px] h-[3px] w-4 shrink-0 bg-[#555]" />
      <div className="ml-3.5 flex h-2 w-[200px] shrink-0 items-center rounded-full bg-[#b0b0b0]">
        <div className="ml-6 size-8 shrink-0 rounded-full bg-white shadow-[0_1px_4px_rgba(0,0,0,0.4)]" />
        <div className="ml-[41px] size-1.5 rounded-full bg-white" />
      </div>
      <Ico className="ml-[11px]" w={20} h={20} stroke="#555" sw={2.400}>
        <path d="M10 1v18M1 10h18" />
      </Ico>
      <Fit w={50} className="ml-[35px]">37%</Fit>
    </footer>
  );
}

/* ------------------------------------------------------------------ */
/* Chart data                                                          */
/* ------------------------------------------------------------------ */

const orange = (name: string, tops: number[], className = "") => (
  <BarChart
    w={145} h={91} plot={[11.7, 6.6, 142.6, 84]} className={className}
    bars={[[17.5, 25, tops[0]], [48.5, 25, tops[1]], [80, 25, tops[2]], [111.5, 25, tops[3]]]}
    colors={["#f2a33a"]} title={`Binary Metrics for ${name}`} labels={metricNames} yTitle="Scores"
    ticks={["0.0", "0.2", "0.4", "0.6", "0.8", "1.0"]} tickStep={14.6} size={2.4}
  />
);

const royal = (name: string, tops: number[], h: number) => (
  <BarChart
    w={150} h={h} plot={[12, 6, 148.5, 87]}
    bars={[[18, 26, tops[0]], [50, 26, tops[1]], [82.5, 26, tops[2]], [115, 26, tops[3]]]}
    colors={["#0202f5"]} title={`Binary Metrics for ${name}`} labels={metricNames} yTitle="Scores"
    ticks={["0.0", "0.2", "0.4", "0.6", "0.8", "1.0"]} tickStep={15.3} size={2.4}
  />
);

const purpleTicks = ["0.0", "0.1", "0.2", "0.3", "0.4", "0.5", "0.6", "0.7", "0.8"];

const codeScores: CodeLine[] = [
  { x: 8, y: 7, t: [["from ", "p"], ["sklearn.model_selection ", "t"], ["import ", "p"], ["cross_val_score", "w"]] },
  { x: 8, y: 16, t: [["# Perform cross-validation on the Fusion model", "g"]] },
  { x: 8, y: 21, t: [["cv_scores = ", "b"], ["cross_val_score", "y"], ["(meta_model, X_train_combined, y_train, cv=5, scoring=", "b"], ["'neg_mean_squared_error'", "o"], [")", "y"]] },
  { x: 8, y: 25.700, t: [["print", "y"], ["(f\"Cross-Validation Scores (MSE): ", "o"], ["{-cv_scores}", "b"], ["\")", "y"]] },
  { x: 8, y: 30.400, t: [["print", "y"], ["(f\"Mean CV MSE: ", "o"], ["{-cv_scores.mean()}", "b"], ["\")", "y"]] },
  { x: 3, y: 44, t: [["Cross-Validation Scores (MSE): [3.99722489 4.03457744 3.88188282 4.04714184 4.30004572]", "w"]] },
  { x: 3, y: 48.500, t: [["Mean CV MSE: 4.0524985692410494", "w"]] },
];

const codeBase: CodeLine[] = [
  { x: 8, y: 8, t: [["# Preprocess the training data", "g"]] },
  { x: 8, y: 13, t: [["X_train_preprocessed = traditional_model.", "b"], ["named_steps", "w"], ["['preprocessor']", "o"], [".transform(X_train)", "b"]] },
  { x: 8, y: 23, t: [["# Preprocess the test data", "g"]] },
  { x: 8, y: 28, t: [["X_test_preprocessed = traditional_model.", "b"], ["named_steps", "w"], ["['preprocessor']", "o"], [".transform(X_test)", "b"]] },
  { x: 8, y: 37.500, t: [["# Train the base models on preprocessed data", "g"]] },
  { x: 8, y: 42.500, t: [["base_model1 = base_models", "b"], ["[0][1].fit", "y"], ["(X_train_preprocessed, y_train)", "b"]] },
  { x: 8, y: 47.500, t: [["base_model2 = base_models", "b"], ["[1][1].fit", "y"], ["(X_train_preprocessed, y_train)", "b"]] },
  { x: 8, y: 57.500, t: [["# Make predictions using the base models", "g"]] },
  { x: 8, y: 62.500, t: [["y_pred_base_1 = base_model1.", "b"], ["predict", "y"], ["(X_test_preprocessed)", "b"]] },
  { x: 8, y: 67.500, t: [["y_pred_base_2 = base_model2.", "b"], ["predict", "y"], ["(X_test_preprocessed)", "b"]] },
  { x: 8, y: 77, t: [["# Evaluate the predictions", "g"]] },
  { x: 8, y: 82, t: [["mse_base_1 = ", "b"], ["mean_squared_error", "y"], ["(y_test, y_pred_base_1)", "b"]] },
  { x: 8, y: 87, t: [["mse_base_2 = ", "b"], ["mean_squared_error", "y"], ["(y_test, y_pred_base_2)", "b"]] },
  { x: 8, y: 97, t: [["print", "y"], ["(f\"Base Model 1 MSE: ", "o"], ["{mse_base_1}", "b"], ["\")", "y"]] },
  { x: 8, y: 102, t: [["print", "y"], ["(f\"Base Model 2 MSE: ", "o"], ["{mse_base_2}", "b"], ["\")", "y"]] },
  { x: 3, y: 116.500, t: [["Base Model 1 MSE: 4.457551041553915", "w"]] },
  { x: 3, y: 121.500, t: [["Base Model 2 MSE: 5.253003664785355", "w"]] },
];

const codeParams: CodeLine[] = [
  { x: 7, y: 7, t: [["from ", "p"], ["sklearn.model_selection ", "t"], ["import ", "p"], ["GridSearchCV", "t"]] },
  { x: 7, y: 16.500, t: [["# Example tuning for GradientBoosting meta-model", "g"]] },
  { x: 7, y: 21.200, t: [["param_grid = ", "b"], ["{", "y"]] },
  { x: 15, y: 26, t: [["'estimator__n_estimators'", "o"], [": [50, 100, 200],", "w"]] },
  { x: 15, y: 30.800, t: [["'estimator__learning_rate'", "o"], [": [0.01, 0.1, 0.2],", "w"]] },
  { x: 15, y: 35.500, t: [["'estimator__max_depth'", "o"], [": [3, 5, 7],", "w"]] },
  { x: 7, y: 40.300, t: [["}", "y"]] },
  { x: 7, y: 50, t: [["# GridSearchCV for tuning", "g"]] },
  { x: 7, y: 54.500, t: [["grid_search = ", "b"], ["GridSearchCV", "t"], ["(estimator=MultiOutputRegressor(GradientBoostingRegressor(random_state=42)),", "t"]] },
  { x: 48, y: 59.200, t: [["param_grid, cv=5, scoring=", "b"], ["'neg_mean_squared_error'", "o"], [", n_jobs=-1)", "b"]] },
  { x: 7, y: 64, t: [["grid_search.", "b"], ["fit", "y"], ["(X_train_combined, y_train)", "b"]] },
  { x: 7, y: 73.500, t: [["# Best parameters and performance", "g"]] },
  { x: 7, y: 78, t: [["print", "y"], ["(f\"Best Params: ", "o"], ["{grid_search.best_params_}", "b"], ["\")", "y"]] },
  { x: 7, y: 82.500, t: [["print", "y"], ["(f\"Best CV Score: ", "o"], ["{-grid_search.best_score_}", "b"], ["\")", "y"]] },
  { x: 2, y: 97, t: [["Best Params: {'estimator__learning_rate': 0.05, 'estimator__max_depth': 3, 'estimator__n_estimators': 100}", "w"]] },
  { x: 2, y: 101.500, t: [["Best CV Score: 4.025020485274454", "w"]] },
];

/* ------------------------------------------------------------------ */
/* Document                                                            */
/* ------------------------------------------------------------------ */

function TopRow() {
  return (
    <div className="flex gap-3">
      <Page n={44} short />
      <Page n={45} short>
        <CodeShot
          w={138} h={38} className="ml-[86px]" size={2}
          lines={[
            { x: 17, y: 3.500, t: [["connect_to_db()", "g"]] },
            { x: 17, y: 6.500, t: [["df = pd.read_csv(file_path)", "b"], [", encoding='utf-8'", "o"]] },
            { x: 17, y: 9.500, t: [["collection.insert_many(df.to_dict('records'))", "b"]] },
            { x: 17, y: 15, t: [["print('Data loaded to MongoDB')", "y"]] },
            { x: 13, y: 20.500, t: [["except Exception as e:", "p"]] },
            { x: 17, y: 23, t: [["print(f'Error: {e}')", "o"]] },
            { x: 13, y: 26, t: [["finally:", "p"]] },
            { x: 17, y: 29, t: [["# Close the MongoDB client", "g"]] },
            { x: 17, y: 31.500, t: [["client.close()", "t"]] },
            { x: 8, y: 36.500, t: [["load_data()", "y"]] },
          ]}
        />
        <Caption className="mt-1" w={96}>Figure 45 - Load Data to Database</Caption>
        <Para
          className="mt-[3px]" open
          lines={[
            "In the SeamSense project, efficient data management is crucial for accurate defect",
            "prediction and analysis. The backend implementation includes a script that automates",
            "the loading of CSV data into a MongoDB database, ensuring seamless integration",
            "between data storage and the analytical models. The script connects to a local",
          ]}
        />
      </Page>
      <Page n={46} short />
      <Page n={47} short>
        <svg width="219" height="44" viewBox="0 0 219 44" className="mt-1 ml-[46px] shrink-0 tracking-normal" fontFamily="Inter, sans-serif" fontSize="3" stroke="none">
          <rect width="219" height="44" fill="#0e1117" />
          <text x="10" y="4" fill="#ddd">Skill</text>
          <rect x="10" y="6" width="195" height="6" rx="1" fill="#262730" />
          <text x="11" y="10.300" fill="#ddd">Recording</text>
          <text x="10" y="17.500" fill="#ddd">Select Date</text>
          <rect x="10" y="19" width="195" height="6" rx="1" fill="#262730" />
          <text x="11" y="23.300" fill="#ddd">2024/08/14</text>
          <rect x="10" y="27" width="11" height="5.500" rx="1" fill="#1b1d25" />
          <text x="11" y="31" fontSize="2.600" fill="#fff">Submit</text>
          <rect x="217.500" width="1.500" height="34" fill="#6a6d75" />
        </svg>
        <Caption className="mt-2" w={111}>Figure 46 - Defect Details Submit Portal</Caption>
      </Page>
      <Page n={48} short>
        <svg width="258" height="13" viewBox="0 0 258 13" className="ml-[26px] shrink-0 tracking-normal" fontFamily="Inter, sans-serif" fontSize="3" stroke="none">
          <rect width="258" height="13" fill="#030303" />
          <circle cx="28" cy="3.500" r="1.500" fill="#b9e6c0" />
          <text x="31" y="4.600" fill="#bbb">Lines</text>
          <circle cx="41" cy="3.500" r="1.500" fill="#5fb0d8" />
          <text x="44" y="4.600" fill="#bbb">Total</text>
          <circle cx="54" cy="3.500" r="1.500" fill="#fff" />
          <text x="57" y="4.600" fill="#bbb">Quantity</text>
        </svg>
        <Caption className="-mt-[2px]" w={82}>Figure 47 - UI for Dashboard</Caption>
      </Page>
      <Page n={49} short>
        <div className="-mt-[7px] h-4 pl-[13px] leading-4">efficiency and overall manufacturing excellence.</div>
      </Page>
    </div>
  );
}

function MiddleRow() {
  return (
    <div className="flex gap-3">
      <Page n={50}>
        <div className="mt-[51px] h-4 text-[9.4px] leading-4 font-bold">
          <Fit w={140}>{"5.  RESULTS & DISCUSSION"}</Fit>
        </div>
        <div className="mt-[3px] h-3.5 pl-[13px] leading-[14px] font-bold">5.1. Results</div>
        <div className="h-2.5 leading-[10px] font-bold">Traditional Model</div>
        <Para
          className="-mt-[3px]"
          lines={[
            "The results section highlights the evaluation of three models—ARIMA, traditional",
            "machine learning models like Lasso Regression, and fusion models—used to predict",
            "defect rates in the SeamSense project. ARIMA models captured time-dependent trends",
            "but had higher Mean Squared Error (MSE) for defect types lacking strong temporal",
            "patterns. Lasso Regression performed well for defects with simpler relationships but",
            "was outperformed by the fusion model, which combined ARIMA and traditional",
            "models. The fusion model consistently delivered lower MSE and higher R² scores,",
            "proving most effective across all defect types. This analysis demonstrates that a hybrid",
            "modeling approach significantly improves predictive accuracy, making it ideal for",
            "quality monitoring systems in manufacturing.",
          ]}
        />
        <BarChart
          className="mt-2.5 ml-[76px]" w={156} h={100} plot={[12, 6, 153.5, 90]}
          bars={[[14.5, 19, 12], [38, 19, 10], [61.500, 19, 14], [85, 19, 13.500], [108.500, 19, 13.700], [132, 19, 14]]}
          colors={["#9cb7cf", "#7fa3c0", "#6890b5", "#50779b", "#4a6079", "#3c4855"]}
          title="Mean Squared Error Comparison Across Models" labels={modelNames} xTitle="Model" yTitle="Mean Squared Error (MSE)"
          ticks={["0.0", "0.5", "1.0", "1.5", "2.0", "2.5", "3.0", "3.5", "4.0"]} tickStep={9.500} size={2.4}
        />
        <Caption className="mt-[9px]" w={132}>Figure 48 - Traditional Model Comparison MSE</Caption>
        <Para
          className="mt-[1px]"
          lines={[
            "The bar chart compares the Mean Squared Error (MSE) of different regression models.",
            "LassoRegression has the lowest MSE, indicating it performed the best in prediction",
            "accuracy among the models tested.",
          ]}
        />
      </Page>

      <Page n={51}>
        <BarChart
          className="mt-[52px] ml-[78px]" w={156} h={100} plot={[12, 6.500, 153.500, 89.500]}
          bars={[[15, 19, 11.500], [38.500, 19, 10.400], [62, 19, 13.700], [85.500, 19, 12.600], [109, 19, 12.600], [132, 19, 13.700]]}
          colors={["#d9907d", "#cc7565", "#be5a4d", "#a64640", "#83413d", "#5a3835"]}
          title="Mean Absolute Error (MAE) Comparison Across Models" labels={modelNames} xTitle="Model" yTitle="Mean Absolute Error"
          ticks={["0.00", "0.25", "0.50", "0.75", "1.00", "1.25", "1.50", "1.75"]} tickStep={10.800} size={2.4}
        />
        <Caption className="mt-2" w={133}>Figure 49 - Traditional Model Comparison MAE</Caption>
        <Para
          className="mt-[3px]"
          lines={[
            "The bar chart shows the Mean Absolute Error (MAE) for different models. All models",
            "have similar MAE values, with LassoRegression and RidgeRegression performing",
            "slightly better, indicating lower prediction errors.",
          ]}
        />
        <BarChart
          className="mt-[7px] ml-[78px]" w={155} h={99} plot={[12.500, 6.500, 153, 89.500]}
          bars={[[15, 19, 48.800], [38.500, 19, 10.400], [61.500, 19, 86], [85, 19, 71.300], [108, 19, 74.600], [131.500, 19, 85.600]]}
          colors={["#9dc49a", "#80ae83", "#609a65", "#4e8256", "#456549", "#384a3c"]}
          title="Positive R² Score Comparison Across Models" labels={modelNames} xTitle="Model" yTitle="R² Scores"
          ticks={["0.00", "0.01", "0.02", "0.03", "0.04", "0.05", "0.06", "0.07"]} tickStep={10.400} size={2.4}
        />
        <Caption className="mt-[9px]" w={143}>Figure 50 - Traditional Model Comparison R2 Score</Caption>
        <Para
          className="mt-[3px]"
          lines={[
            "This bar plot presents the R² score comparison across different models, with all scores",
            "displayed as positive values for easier comparison. The Gradient Boosting model",
            "exhibits the highest adjusted R² score, indicating a better fit among the evaluated",
            "models. Other models, such as Random Forest and Linear Regression, show lower",
            "adjusted R² scores, suggesting they may not capture the variability in the data as",
            "effectively.",
          ]}
        />
      </Page>

      <Page n={52}>
        <div className="mt-[52px] ml-3 flex">
          <SkillChart name="Run_Off" hist={[30, 29, 30, 7, 29, 30, 6, 6]} skills={[6, 30, 29, 29]} />
          <SkillChart name="Open_Seam" hist={[29, 30, 30, 7, 30, 6, 10, 33]} skills={[6, 28.500, 28, 29.500]} />
        </div>
        <div className="mt-[11px] ml-3 flex">
          <SkillChart name="SPI_Errors" hist={[30, 30, 29, 6, 29, 30, 6, 6]} skills={[6, 29.500, 29, 28.500]} />
          <SkillChart name="High_Low" hist={[29, 30, 28.500, 8, 29, 6, 7, 32]} skills={[6, 28, 29.500, 28.500]} />
        </div>
        <Caption className="mt-[9px]" w={124}>Figure 51 - Skill Level and Age Analysis TRM</Caption>
        <Para
          className="mt-[3px]"
          lines={[
            "This chart shows the age distribution and skill levels for the 'Run Off, High Low, Open",
            "Seam, SPI Error' defect. The left histogram highlights how age groups relate to this",
            "defect, while the right bar chart displays the distribution of skill levels associated with",
            "‘'Run Off, High Low, Open Seam, SPI Error’.",
          ]}
        />
        <div className="mt-[9px] ml-[26px] flex gap-[3px]">
          <Heatmap w={127} name="Run_Off" rows={["POPOPPO_", "OPGGOPO_", "KKTKKWTR", "PPPPGPO_"]} />
          <Heatmap w={128} name="Open_Seam" rows={["GGBGBRB", "BGGBBBB", "WTKKTWW", "RBGBBGB"]} />
        </div>
        <div className="mt-[11px] ml-[26px] flex gap-[3px]">
          <Heatmap w={127} name="SPI_Errors" rows={["BBRGRRR", "RBRBRBR", "YWTTWKO", "RRRBBRG"]} />
          <Heatmap w={128} name="High_Low" rows={["BBRBRRG", "RBGBRRG", "KWKYWTT", "GRBBRBB"]} />
        </div>
        <Caption className="mt-[9px]" w={205}>Figure 52 - Heatmap provides a visual representation of defect counts TRM</Caption>
      </Page>

      <Page n={53}>
        <Para
          className="mt-[49px]"
          lines={[
            "The heatmap provides a visual representation of defect counts for `'Run Off, High Low,",
            "Open Seam, SPI Error ` across different skill levels (`Advance`, `Beginner`, `Expert`,",
            "`Intermediate`). Each cell shows the exact count of defects, with color intensity",
            "indicating the magnitude of these counts. This visualization allows for easy comparison",
            "of defect occurrences across skill levels and defect types, offering insights into potential",
            "areas for improvement in production quality control.",
          ]}
        />
        <div className="mt-[9px] flex gap-px">
          {orange("Run_Off", [23, 23, 10.400, 17.500])}
          {orange("Open_Seam", [21.400, 21.400, 10.400, 16])}
        </div>
        <div className="mt-[11px] flex gap-px">
          {orange("SPI_Errors", [21.400, 21.400, 10.400, 16.500])}
          {orange("High_Low", [23, 23, 10.400, 17])}
        </div>
        <Caption className="mt-[9px]" w={143}>Figure 53 - Binary metrics for each defect type TRM</Caption>
        <Table
          className="mt-[6px] ml-3.5 w-[254px]" cols="grid-cols-[91px_44px_42px_31px_44px]" lead="leading-[7px]"
          rows={[
            { h: "h-[11px]", cells: ["", "Accuracy", "Precision", "Recall", "F1 Score"] },
            { h: "h-[21px]", cells: ["Overall Binary Metrics", "0.14", "0.2", "0.14", "0.35"] },
          ]}
        />
        <Caption className="-mt-[2px]" w={104}>Table 4 - Overall Binary Metrics TRM</Caption>
        <Para
          className="mt-[2px]" open
          lines={[
            "Binary metrics are used to assess the effectiveness of traditional models in predicting",
            "the presence or absence of defects. These metrics include accuracy, precision, recall,",
            "and F1 score. Accuracy measures how often the model correctly predicts defects or",
            "non-defects, providing an overall performance indicator. Precision evaluates the",
            "proportion of correct positive predictions, indicating the model's reliability in predicting",
            "actual defects. Recall assesses the model’s ability to detect all actual defects, showing",
            "how well it captures the true defect cases. The F1 score balances precision and recall,",
            "offering a comprehensive measure of the model’s ability to identify defects while",
          ]}
        />
      </Page>

      <Page n={54}>
        <Para
          className="mt-[49px]"
          lines={[
            "minimizing errors. Together, these metrics ensure that your models effectively",
            "contribute to maintaining high production quality by accurately predicting defects.",
          ]}
        />
        <Table
          className="mt-2 ml-[70px] w-[168px]" cols="grid-cols-[56px_54px_56px]" lead="leading-[7px]"
          rows={[
            { h: "h-[22px]", cells: ["Defect Type", "MSE", "MAE"] },
            { h: "h-[22px]", cells: ["Run Off", "4.16", "1.76"] },
            { h: "h-[22px]", cells: ["Open Seam", "4.07", "1.71"] },
            { h: "h-[22px]", cells: ["SPI Error", "4.15", "1.76"] },
            { h: "h-[19px]", cells: ["High Low", "4.16", "1.74"] },
          ]}
        />
        <Caption className="-mt-[2px]" w={108}>Table 5 - Each defect type Metrics TRM</Caption>
        <Para
          className="mt-[3px]"
          lines={[
            "Metrics are crucial for evaluating the performance of the models in predicting defect",
            "rates. The key metrics used include Mean Squared Error (MSE), R² score, and Mean",
            "Absolute Error (MAE). MSE measures the average squared difference between the",
            "actual and predicted values, providing an indication of how close the predictions are to",
            "the real values. The R² score, or coefficient of determination, assesses the proportion of",
            "variance in the dependent variable that is predictable from the independent variables,",
            "reflecting the model's explanatory power. MAE calculates the average absolute",
            "difference between predicted and actual values, offering a straightforward measure of",
            "prediction accuracy. These metrics collectively provide a comprehensive evaluation of",
            "the model's performance, guiding the selection of the most effective model for defect",
            "rate prediction.",
          ]}
        />
      </Page>

      <Page n={55}>
        <div className="mt-[49px] h-4 leading-4 font-bold">Time Series Model</div>
        <div className="mt-[9px] flex">
          <Series w={146} seed={71} high={30} name="Run_Off" />
          <Series w={145} seed={913} high={8} name="Open_Seam" />
        </div>
        <div className="mt-[11px] flex">
          <Series w={146} seed={4241} high={8} name="SPI_Errors" />
          <Series w={145} seed={5557} high={8} name="High_Low" />
        </div>
        <Caption className="mt-[5px]" w={144}>Figure 54 - Time Series Forecasting each defect type</Caption>
        <Para
          className="mt-[3px]"
          lines={[
            "The four plots illustrate the future forecasts for the defect types: Run Off, Open Seam,",
            "SPI Errors, and High_Low. Each graph displays the observed defect counts in red, with",
            "future predictions shown in purple. The forecasts indicate trends for each defect type,",
            "providing insights for potential areas of improvement or maintenance. For example,",
            "while 'Runoff' and 'SPI_Errors' show fluctuations with potential increases, 'Open Seam'",
            "and 'High_Low' display more stability, though slight variations may still occur. These",
            "visualizations are essential for proactive quality control measures.",
          ]}
        />
      </Page>
    </div>
  );
}

function BottomRow() {
  return (
    <div className="flex gap-3">
      <Page n={56}>
        <div className="mt-[68px] flex">
          {royal("Run_Off", [25.500, 25.500, 10.300, 18.800], 94)}
          {royal("Open_Seam", [25.500, 25.500, 10.300, 18.800], 94)}
        </div>
        <div className="mt-[7px] flex">
          {royal("SPI_Errors", [41, 41, 10.300, 29], 94)}
          {royal("High_Low", [26, 26, 10.300, 19.300], 94)}
        </div>
        <Caption className="mt-[5px]" w={86}>Figure 55 - Binary Metrics TSA</Caption>
        <Para
          className="mt-[3px]"
          lines={[
            "\u00a0The binary classification metrics for the defect types Run off, Open Seam, SPI_Errors,",
            "and High_Low are presented through key metrics such as Accuracy, Precision, Recall,",
            "and F1 Score. These metrics provide insight into the model's performance in predicting",
            "defects, with Accuracy indicating the overall correctness of the predictions, Precision",
            "showing the accuracy of the positive predictions, Recall reflecting the model's ability",
            "to detect all actual defects, and F1 Score offering a balanced metric between precision",
            "and recall. The results demonstrate strong recall across all defect types, indicating the",
            "models' effectiveness in identifying defects, though some trade-offs with precision",
            "suggest occasional false positives. These metrics are essential in evaluating the models'",
            "strengths and weaknesses, guiding further refinements in the defect detection process.",
          ]}
        />
      </Page>

      <Page n={57}>
        <Table
          className="mt-[74px] -ml-1.5 w-[318px]" cols="grid-cols-[51px_56px_56px_54px_48px_50px]" lead="leading-[7px]"
          rows={[
            { h: "h-[33px] [&>div>div+div]:mt-[9px]", cells: ["Defect\nType", "RMSE", "Accuracy", "Precision", "Recall", "F1 Score"] },
            { h: "h-[16px]", cells: ["Run Off", "4.34", "0.8", "0.8", "1.0", "0.88"] },
            { h: "h-[18px]", cells: ["Open Seam", "1.56", "0.8", "0.8", "1.0", "0.88"] },
            { h: "h-[18px]", cells: ["SPI Error", "2.24", "0.6", "0.6", "1.0", "0.75"] },
            { h: "h-[14px]", cells: ["High Low", "1.90", "0.8", "0.8", "1.0", "0.88"] },
          ]}
        />
        <Caption className="-mt-[3px]" w={115}>Table 6 - Comparison table of defect types</Caption>
        <BarChart
          className="mt-[5px] ml-12" w={213} h={155} plot={[17, 9, 210, 124]} rotated
          bars={[[28, 24.500, 14.300], [76, 25, 14.300], [125, 24.500, 41.600], [173, 24.500, 14.300]]}
          colors={["#80177f"]} title="Accuracy Comparison Across Defect Types" labels={defectNames} xTitle="Defect Type" yTitle="Accuracy"
          ticks={purpleTicks} tickStep={13.700}
        />
        <Caption className="mt-[5px]" w={150}>Figure 56 - Accuracy Comparison Across Defect Types</Caption>
        <BarChart
          className="mt-[6px] ml-12" w={213} h={156} plot={[17, 9, 210, 124]} rotated
          bars={[[28, 24.500, 14.300], [76, 25, 14.300], [125, 24.500, 41.600], [173, 24.500, 14.300]]}
          colors={["#80177f"]} title="Precision Comparison Across Defect Types" labels={defectNames} xTitle="Defect Type" yTitle="Precision"
          ticks={purpleTicks} tickStep={13.700}
        />
        <Caption className="-mt-[2px]" w={152}>Figure 57 – Precision Comparison Across Defect Types</Caption>
      </Page>

      <Page n={58}>
        <BarChart
          className="mt-[62px] ml-[42px]" w={227} h={166} plot={[17.500, 10, 223.500, 132.500]} rotated
          bars={[[30, 26, 15.200], [81.500, 26, 15.200], [133, 26, 44.800], [185, 26, 15.200]]}
          colors={["#80177f"]} title="Precision Comparison Across Defect Types" labels={defectNames} xTitle="Defect Type" yTitle="Precision"
          ticks={purpleTicks} tickStep={14.600} size={2.800}
        />
        <Caption className="-mt-[2px]" w={142}>Figure 58 - Recall Comparison Across Defect Types</Caption>
        <BarChart
          className="mt-4 ml-[42px]" w={224} h={164} plot={[17.500, 9.500, 221, 131]} rotated
          bars={[[30, 26, 15.200], [80, 26, 15.200], [131, 26.500, 33], [182, 26, 15.200]]}
          colors={["#80177f"]} title="F1 Score Comparison Across Defect Types" labels={defectNames} xTitle="Defect Type" yTitle="F1 Scores"
          ticks={["0.0", "0.2", "0.4", "0.6", "0.8"]} tickStep={26} size={2.800}
        />
        <Caption className="mt-1" w={148}>Figure 59 - F1 Score Comparison Across Defect Types</Caption>
      </Page>

      <Page n={59}>
        <div className="mt-[51px] h-4 pl-[2px] leading-4 font-bold">Fusion Model</div>
        <Table
          className="mt-[13px] ml-[68px] w-[172px]" cols="grid-cols-[56px_58px_56px]" left lead="leading-3"
          rows={[
            { h: "h-[18px]", cells: ["Defect Type", "MSE", "MAE"] },
            { h: "h-[18px]", cells: ["Run Off", "4.16", "1.76"] },
            { h: "h-[16px]", cells: ["Open Seam", "4.07", "1.71"] },
            { h: "h-[18px]", cells: ["SPI Error", "4.15", "1.76"] },
            { h: "h-[16px]", cells: ["High Low", "4.16", "1.74"] },
          ]}
        />
        <Caption className="-mt-[2px]" w={90}>Table 7 - Stacking Model Metrics</Caption>
        <svg width="187" height="42" viewBox="0 0 187 53" preserveAspectRatio="none" className="mt-4 ml-[62px] shrink-0">
          <CodeShot w={187} h={53} split={37} lines={codeScores} />
        </svg>
        <Caption className="mt-1" w={136}>Figure 60 - Fusion Model Cross validation scores</Caption>
        <Para
          className="mt-[3px]"
          lines={[
            "For each base model, we evaluated its performance on the test set by calculating the",
            "Mean Squared Error (MSE) and the R² score. The MSE measures the average squared",
            "difference between the actual and predicted values, while the R² score indicates how",
            "well the model explains the variance in the target variable. The results show the",
            "effectiveness of each model in predicting defect types, with the R² score reflecting the",
            "model's ability to fit the data, where a positive value suggests better performance. These",
            "evaluations provide a benchmark for comparing the performance of the stacking model",
            "against its individual components.",
          ]}
        />
        <svg width="153" height="104" viewBox="0 0 153 128" preserveAspectRatio="none" className="mt-[3px] ml-[78px] shrink-0">
          <CodeShot w={153} h={128} split={110} lines={codeBase} />
        </svg>
        <Caption className="mt-1" w={79}>Figure 61 - Base Model MSE</Caption>
        <Para
          className="mt-[3px]" open
          lines={[
            "In the final report, this section explains how the base models were trained and evaluated",
            "using preprocessed data. The training data underwent preprocessing using the pipeline",
          ]}
        />
      </Page>

      <Page n={60}>
        <Para
          className="mt-[49px]"
          lines={[
            "from the traditional model to ensure consistency. Each base model was then trained on",
            "this preprocessed data, and predictions were made on the test set. The performance of",
            "these models was assessed by calculating the Mean Squared Error (MSE) for each,",
            "which measures the average squared difference between the predicted and actual defect",
            "counts. These MSE values provide insight into how well each base model performs",
            "individually, forming a basis for further comparison and model improvement.",
          ]}
        />
        <svg width="174" height="85" viewBox="0 0 174 105" preserveAspectRatio="none" className="mt-[17px] ml-[68px] shrink-0">
          <CodeShot w={174} h={105} split={91} lines={codeParams} />
        </svg>
        <Caption className="mt-1" w={104}>Figure 62 - Fusion Model best params</Caption>
        <Para
          className="mt-[4px]"
          lines={[
            "In the final report, this section details the process of fine-tuning the Gradient Boosting",
            "meta-model using {GridSearchCV}, a hyperparameter optimization technique. The",
            "{GridSearchCV} method was employed to explore different combinations of",
            "hyperparameters, specifically the number of estimators, learning rate, and maximum",
            "depth of the trees, which are crucial for the model's performance.",
          ]}
        />
        <Para
          className="mt-[6px]"
          lines={[
            "The grid search was conducted over a predefined parameter grid, evaluating each",
            "combination through cross-validation (CV) on the training data. The model was",
            "assessed using the negative Mean Squared Error (MSE) as the scoring metric, which is",
            "standard for regression tasks. The process identified the best-performing",
            "hyperparameter set that minimized the MSE across the cross-validation folds.",
          ]}
        />
        <Para
          className="mt-1"
          lines={[
            "The results include the optimal hyperparameters (`{n_estimators}`, `{learning_rate}`, and",
            "`{max_depth}`) and the best cross-validation score, which reflects the model's ability to",
            "generalize to unseen data. This fine-tuning step is critical in enhancing the predictive",
            "accuracy and robustness of the stacking model by ensuring that the meta-model is",
            "configured optimally.",
          ]}
        />
      </Page>

      <Page n={61}>
        <div className="mt-[49px] h-4 pl-[13px] leading-4 font-bold">5.2. Research Findings</div>
        <div className="mt-[2px] h-4 pl-[13px] leading-4 font-bold">5.3. Discussion</div>
      </Page>
    </div>
  );
}

export default function App() {
  return (
    <div className="flex h-[1912px] w-[2940px] flex-col overflow-hidden bg-[#f5f5f5] font-['Inter',sans-serif]">
      <div className="flex h-[74px] shrink-0 items-start justify-end bg-black">
        <div className="mt-[25px] mr-[26px] size-3 rounded-full bg-[#c8771c]" />
      </div>
      <header className="h-[286px] shrink-0 border-b-2 border-[#c6c6c6]">
        <TitleBar />
        <TabBar />
        <Ribbon />
      </header>
      <main className="flex h-[1496px] shrink-0 justify-center overflow-hidden bg-[#ebebeb]">
        <div className="flex h-[1500px] w-[2736px] flex-col gap-3 bg-[#e0e0e0] shadow-[0_0_28px_#cfcfcf]">
          <TopRow />
          <MiddleRow />
          <BottomRow />
        </div>
      </main>
      <StatusBar />
    </div>
  );
}
